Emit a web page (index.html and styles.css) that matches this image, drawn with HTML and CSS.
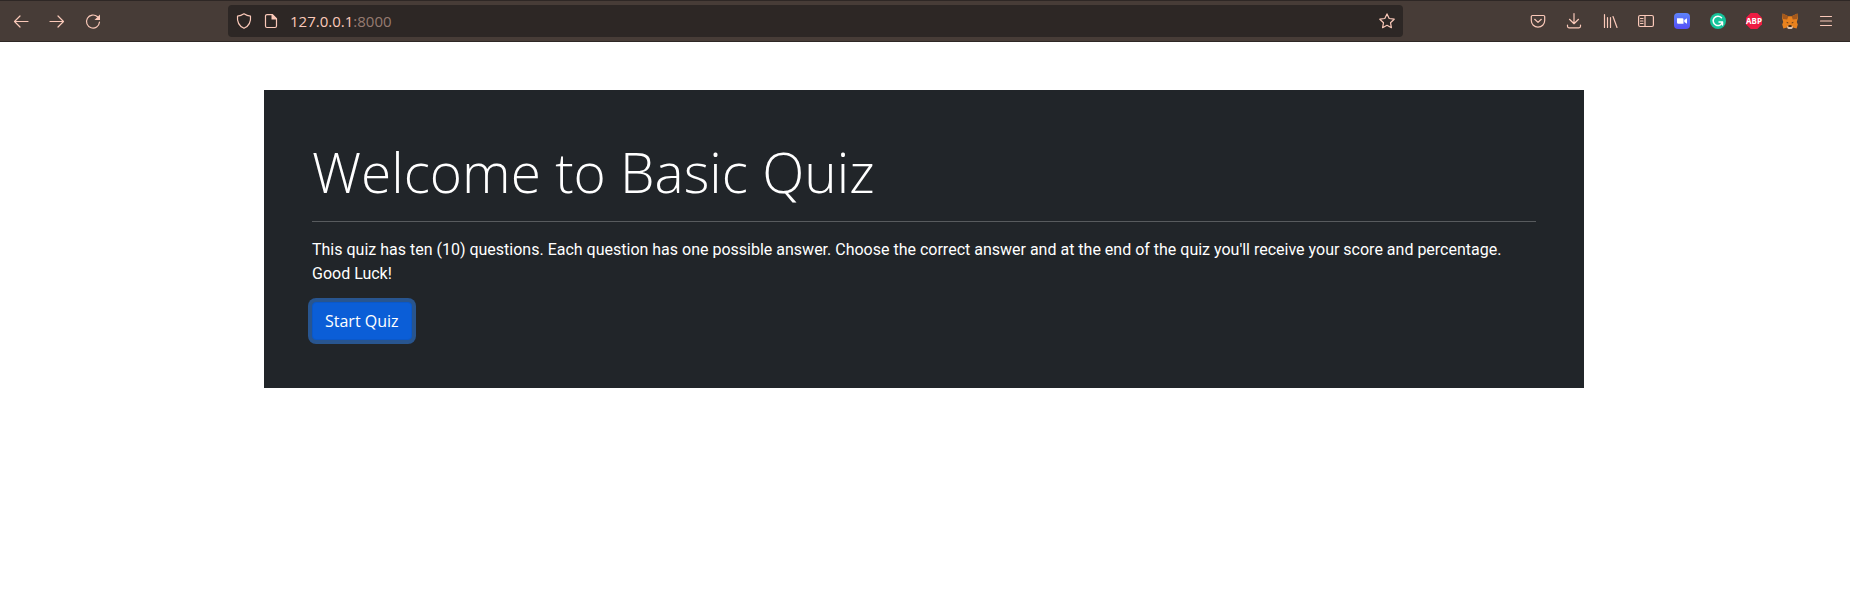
FILE: index.html
```html
<!DOCTYPE html>
<html lang="en">
<head>
<meta charset="utf-8">
<meta name="viewport" content="width=device-width, initial-scale=1">
<title>Basic Quiz</title>
<link rel="stylesheet" href="styles.css">
</head>
<body>
<header class="toolbar">
  <nav class="tools" aria-label="Navigation">
    <button class="tool" type="button" aria-label="Back"><svg class="icon" viewBox="0 0 16 16"><path d="M15 8.500H1.500M7 3L1.500 8.500L7 14"/></svg></button>
    <button class="tool" type="button" aria-label="Forward"><svg class="icon" viewBox="0 0 16 16"><path d="M1 8.500h13.500M9 3L14.500 8.500L9 14"/></svg></button>
    <button class="tool" type="button" aria-label="Reload"><svg class="icon" viewBox="0 0 16 16"><path d="M12.500 3.800A6.500 6.500 0 1 0 14.500 9"/><path class="solid" d="M15 1.500v5.500H9.500z"/></svg></button>
  </nav>
  <div class="address">
    <svg class="icon" viewBox="0 0 16 16"><path d="M8 .8C10 2.200 12 3 14.500 3.200C15 8 13 13 8 15.300C3 13 1 8 1.500 3.200C4 3 6 2.200 8 .8z"/></svg>
    <svg class="icon" viewBox="0 0 16 16"><path d="M4 1.600h5.500l4 4V13a1.500 1.500 0 0 1-1.500 1.500H4A1.500 1.500 0 0 1 2.500 13V3.100A1.500 1.500 0 0 1 4 1.600z"/><path class="solid" d="M8.500 1.500h1l4 4v1h-5z"/></svg>
    <span class="url">127.0.0.1<span class="port">:8000</span></span>
    <button class="star" type="button" aria-label="Bookmark"><svg class="icon" viewBox="0 0 16 16"><path d="M8 .9l2.200 4.600 5 .7-3.700 3.500.9 5L8 12.300l-4.400 2.400.9-5L.8 6.200l5-.7z"/></svg></button>
  </div>
  <div class="tools">
    <button class="tool" type="button" aria-label="Save to Pocket"><svg class="icon" viewBox="0 0 16 16"><path d="M2.500 2.500h11a1.200 1.200 0 0 1 1.200 1.200V7.500a6.700 6.700 0 0 1-13.400 0V3.700A1.200 1.200 0 0 1 2.500 2.500zM4.700 6.300L8 9.400l3.300-3.100"/></svg></button>
    <button class="tool" type="button" aria-label="Downloads"><svg class="icon" viewBox="0 0 16 16"><path d="M8 .5v10M3.500 6.300L8 10.700l4.500-4.400M1.500 12v1.300a1.500 1.500 0 0 0 1.500 1.500h10a1.500 1.500 0 0 0 1.500-1.500V12"/></svg></button>
    <button class="tool" type="button" aria-label="Library"><svg class="icon" viewBox="0 0 16 16"><path d="M2.500 1.500v13M5.500 4.500v10M8.500 4.500v10M11 3.500l4 11"/></svg></button>
    <button class="tool" type="button" aria-label="Sidebars"><svg class="icon" viewBox="0 0 16 16"><rect x=".6" y="2.500" width="14.800" height="11" rx="1.500"/><path d="M7 2.500v11M2.500 5.500h2.500M2.500 8h2.500M2.500 10.500h2.500"/></svg></button>
    <button class="tool" type="button" aria-label="Zoom"><svg class="icon" viewBox="0 0 16 16"><defs><linearGradient id="zoom-fill" x1="0" y1="0" x2="0" y2="1"><stop offset="0" stop-color="#5d84fb"/><stop offset="1" stop-color="#554ef8"/></linearGradient></defs><rect class="plain" fill="url(#zoom-fill)" width="16" height="16" rx="4"/><path class="white" d="M3 5.200h5.300q1.200 0 1.200 1.200v4.400H4.200Q3 10.800 3 9.600zM10.300 7L13 5.200v5.600L10.300 9z"/></svg></button>
    <button class="tool" type="button" aria-label="Grammarly"><svg class="icon" viewBox="0 0 16 16"><circle class="green" cx="8" cy="8" r="8"/><path class="gee" d="M11.500 4.800A4.700 4.700 0 1 0 12.500 8.900H9M12.500 8.900v3"/></svg></button>
    <button class="tool" type="button" aria-label="Adblock Plus"><svg class="icon" viewBox="0 0 16 16"><path class="red" d="M4.700 0h6.600L16 4.700v6.600L11.300 16H4.700L0 11.300V4.700z"/><text class="abp" x="8" y="11" text-anchor="middle">ABP</text></svg></button>
    <button class="tool" type="button" aria-label="MetaMask"><svg class="icon" viewBox="0 0 16 16"><path class="fox" d="M.6.4L6.300 3.200h3.400L15.400.4l.4 5-1 3.600 1 2.500-1.200 3.900-3.600-1-1.600 1.400H6.600L5 14.400l-3.600 1L.2 11.500l1-2.500-1-3.600z"/><path class="foxdark" d="M.6.4L6.300 3.200 5.200 6.500.9 6zM15.400.4L9.700 3.200l1.100 3.300 4.300-.5z"/><path class="foxnose" d="M4 8.800l2.400.9-.4.9zM12 8.800l-2.400.9.400.9z"/><path class="foxlight" d="M5 13l1.400.8h3.200L11 13l-.6 2.500-1 .5H6.600l-1-.5z"/><path class="foxnose" d="M6.500 12.200h3v1.700h-3z"/></svg></button>
    <button class="tool" type="button" aria-label="Menu"><svg class="icon" viewBox="0 0 16 16"><path d="M2.500 3.500h11M2.500 8h11M2.500 12.500h11"/></svg></button>
  </div>
</header>
<main class="page">
  <section class="card">
    <h1 class="title">Welcome to Basic Quiz</h1>
    <hr class="rule">
    <p class="intro">This quiz has ten (10) questions. Each question has one possible answer. Choose the correct answer and at the end of the quiz you'll receive your score and percentage. Good Luck!</p>
    <button class="start" type="button">Start Quiz</button>
  </section>
</main>
</body>
</html>
```
FILE: styles.css
```css
* { box-sizing: border-box; }
body {
  margin: 0;
  background: #fff;
  font: 16px/24px Roboto, sans-serif;
}
.toolbar {
  display: flex;
  align-items: center;
  height: 42px;
  padding: 0 6px 0 3px;
  background: #473c37;
  border-top: 1px solid #2e2725;
  border-bottom: 1px solid #2e2725;
}
.tools { display: flex; }
.tool, .star {
  display: flex;
  align-items: center;
  justify-content: center;
  height: 32px;
  padding: 0;
  border: 0;
  background: none;
}
.tool { width: 36px; }
.icon {
  width: 16px;
  height: 16px;
  flex: none;
  overflow: visible;
  fill: none;
  stroke: #fbc9b9;
  stroke-width: 1.2;
  stroke-linecap: round;
  stroke-linejoin: round;
}
.icon .solid { fill: #fbc9b9; stroke: none; }
.icon .plain { stroke: none; }
.icon .white { fill: #fff; stroke: none; }
.icon .green { fill: #15c39a; stroke: none; }
.icon .gee { stroke: #fff; stroke-width: 1.5; }
.icon .red { fill: #ee1c43; stroke: none; }
.icon .abp { fill: #fff; stroke: none; font: 700 8px "Noto Sans", sans-serif; }
.icon .fox { fill: #e8821e; stroke: none; }
.icon .foxdark { fill: #a4581c; stroke: none; }
.icon .foxlight { fill: #d8c4b4; stroke: none; }
.icon .foxnose { fill: #231f20; stroke: none; }
.address {
  display: flex;
  flex: 1;
  align-items: center;
  gap: 11px;
  height: 32px;
  margin: 0 117px;
  padding: 0 8px;
  border-radius: 4px;
  background: #2d2725;
}
.url {
  flex: 1;
  color: #fbc9b9;
  font-family: "Open Sans", sans-serif;
  font-size: 15px;
}
.port { color: #967b71; }
.page {
  display: flex;
  justify-content: center;
  padding: 48px 2px 48px 0;
}
.card {
  width: 100%;
  max-width: 1320px;
  padding: 48px;
  background: #212529;
  color: #fff;
}
.title {
  margin: 0;
  font-family: "Open Sans", sans-serif;
  font-size: 55px;
  font-weight: 300;
  line-height: 67px;
}
.rule {
  height: 1px;
  margin: 16px 0;
  border: 0;
  background: #585b5e;
}
.intro { margin: 0 0 16px; }
.start {
  display: block;
  padding: 6px 12px;
  border: 1px solid #0a58ca;
  border-radius: 4px;
  background: #0b5ed7;
  box-shadow: 0 0 0 4px #28558f;
  color: #fff;
  font-family: "Open Sans", sans-serif;
  font-size: 16px;
  line-height: 24px;
}
```
